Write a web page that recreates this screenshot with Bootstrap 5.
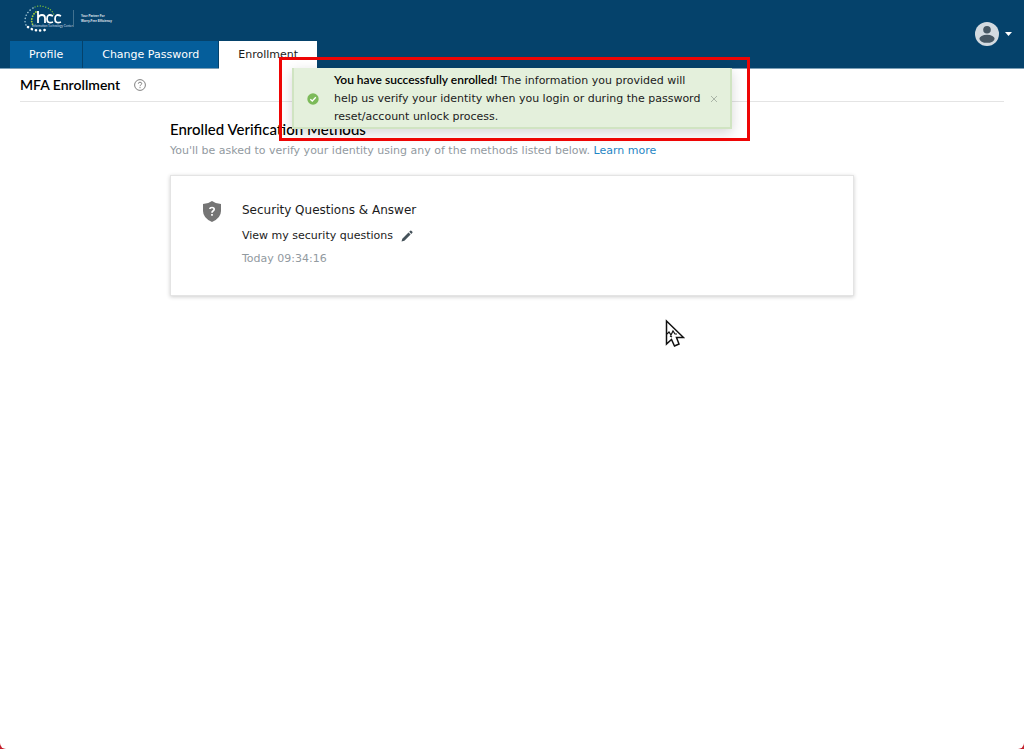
<!DOCTYPE html>
<html lang="en">
<head>
<meta charset="utf-8">
<meta name="viewport" content="width=device-width, initial-scale=1">
<title>MFA Enrollment</title>
<link href="https://cdn.jsdelivr.net/npm/bootstrap@5.3.0/dist/css/bootstrap.min.css" rel="stylesheet">
<style>
  html { background: #c4202c; }
  body { font-family: "DejaVu Sans", Verdana, sans-serif; font-size: 11px; line-height: 18px; color: #1b1b1b; background: #fff; border-radius: 0 0 6px 6px; }
  .lato { font-family: Lato, sans-serif; font-weight: 600; color: #000; }
  h1.lato { font-size: 14px; line-height: 18px; }
  h2.lato { font-size: 15px; line-height: 18px; font-weight: 500; }
  strong.lato { font-size: 12px; line-height: 12px; }
  .topbar { background: #05426b; border-bottom: 1px solid #7d9fb6; padding-left: 10px; }
  .brand-mark { height: 33px; margin: 4px 0 4px 13px; }
  .tabs { gap: 1px; }
  .tabs .nav-link { background: #055e9b; color: #fff; border-radius: 0; padding: 5px 19px 4px; }
  .tabs .nav-link.active { background: #fff; color: #1b1b1b; margin-bottom: -1px; }
  .account { margin-right: 12px; gap: 6px; }
  .page-head { margin: 0 20px; padding: 7px 0; gap: 14px; border-bottom: 1px solid #e4e4e4; }
  .methods { max-width: 684px; margin: 18px auto 0; }
  .muted { color: #929a9f; }
  .learn { color: #1f86c4; }
  .intro { margin-top: 4px; }
  .method-card { margin-top: 15px; padding: 25px 31px 27px; gap: 20px; border: 1px solid #e4e4e4; border-radius: 0; box-shadow: 0 1px 4px rgba(0,0,0,.2); }
  .method-title { font-size: 12px; }
  .stamp { margin-top: 5px; }
  .notice { position: absolute; z-index: 2; top: 68px; left: 50%; margin-left: -220px; width: 440px; background: #e4f0dc; border: 2px solid #d0e4c2; border-top: 0; border-radius: 0; padding: 4px 12px 1px 13px; box-shadow: 0 4px 12px rgba(0,0,0,.16); }
  .notice-text { padding: 0 8px 0 15px; }
  .outline-box { position: absolute; z-index: 3; top: 57px; left: 50%; margin-left: -233px; width: 471px; height: 84px; border: 3px solid #ee0505; pointer-events: none; }
  .pointer { position: absolute; top: 319px; left: 665px; }
</style>
</head>
<body class="min-vh-100 position-relative">
<header class="topbar d-flex justify-content-between">
  <div>
    <a href="#" class="d-block brand-mark" aria-label="hcc home">
      <svg class="d-block" width="100" height="33" viewBox="0 0 100 33" fill="none">
        <g stroke-linecap="round">
          <path d="M12 3Q17 1 22 3Q29 5 31 11" stroke="#79bd3a" stroke-width="1.3" stroke-dasharray=".1 2.6"/>
          <path d="M13 8Q10 10 9 14Q8 18 10 21" stroke="#a5cf3c" stroke-width="1.8" stroke-dasharray=".1 2.6"/>
          <path d="M10 4Q2 9 2 17Q2 22 7 25" stroke="#a9cbd9" stroke-width="1.5" stroke-dasharray=".1 3.2"/>
          <path d="M5 23Q12 28 22 26" stroke="#fff" stroke-width="2.6" stroke-dasharray=".1 4.2"/>
        </g>
        <path d="M15 7V19M15 14Q16 11 19 11Q22 11 22 14V19M30 12Q24 9 24 15Q24 20 30 18M38 12Q32 9 32 15Q32 20 38 18" stroke="#fff" stroke-width="1.8"/>
        <text x="9" y="23" fill="#cfdfe9" font-family="Lato, sans-serif" font-size="3">Information Technology Center</text>
        <path d="M50.500 6V23" stroke="#42718f"/>
        <g fill="#e2ebf1" font-family="Liberation Sans, sans-serif" font-size="3" font-weight="bold"><text x="58" y="13">Your Partner For</text><text x="58" y="18">Worry-Free Efficiency</text></g>
      </svg>
    </a>
    <nav class="nav tabs flex-nowrap">
      <a class="nav-link" href="#">Profile</a>
      <a class="nav-link" href="#">Change Password</a>
      <a class="nav-link active" aria-current="page" href="#">Enrollment</a>
    </nav>
  </div>
  <button class="btn border-0 p-0 d-flex align-items-center account" type="button" aria-label="Account menu">
    <svg width="24" height="24" viewBox="0 0 24 24"><circle cx="12" cy="12" r="12" fill="#d3dae0"/><circle cx="12" cy="7.700" r="3.800" fill="#475763"/><ellipse cx="12" cy="16.800" rx="7.600" ry="4" fill="#475763"/></svg>
    <svg width="7" height="4" viewBox="0 0 7 4"><path d="M0 0H7L3.500 4Z" fill="#fff"/></svg>
  </button>
</header>
<main>
  <div class="page-head d-flex align-items-center">
    <h1 class="lato m-0">MFA Enrollment</h1>
    <svg width="12" height="12" viewBox="0 0 12 12" fill="none" stroke="#808080"><circle cx="6" cy="6" r="5.400"/><path d="M4.300 4.700Q4.400 3.200 6 3.200Q7.700 3.200 7.700 4.600Q7.700 5.400 6.800 5.900Q6 6.400 6 7.200M6 8.100V9.200"/></svg>
  </div>
  <section class="methods">
    <h2 class="lato m-0">Enrolled Verification Methods</h2>
    <p class="muted intro mb-0">You'll be asked to verify your identity using any of the methods listed below. <a class="learn text-decoration-none" href="#">Learn more</a></p>
    <div class="card method-card flex-row align-items-start">
      <svg width="20" height="21" viewBox="0 0 20 21"><path d="M10 0Q14 3 19 3V10Q19 17 10 21Q1 17 1 10V3Q6 3 10 0Z" fill="#757575"/><path d="M7.800 8Q8 6.500 10 6.500Q12.200 6.500 12.200 8.300Q12.200 9.300 11 10Q10 10.600 10 11.800M10 13V14.800" fill="none" stroke="#fff" stroke-width="1.700"/></svg>
      <div>
        <div class="method-title">Security Questions &amp; Answer</div>
        <div class="d-flex align-items-center mt-2"><span>View my security questions</span>
          <button type="button" class="btn border-0 p-0 d-flex ms-2" aria-label="Edit security questions"><svg width="12" height="12" viewBox="0 0 12 12" fill="#45525a"><path d="M.5 11.500L1.300 8.700L7.500 2.500L9.600 4.600L3.400 10.800ZM8.200 1.800L9.300.7Q9.800.3 10.300.7L11.400 1.800Q11.800 2.300 11.400 2.800L10.300 3.900Z"/></svg></button>
        </div>
        <div class="muted stamp">Today 09:34:16</div>
      </div>
    </div>
  </section>
</main>
<div class="notice d-flex align-items-center" role="alert">
  <svg class="flex-shrink-0" width="12" height="12" viewBox="0 0 12 12"><circle cx="6" cy="6" r="5.700" fill="#7cba59"/><path d="M3.300 6.200L5.300 8L8.800 4.300" fill="none" stroke="#fff" stroke-width="1.300"/></svg>
  <p class="mb-0 flex-grow-1 notice-text"><strong class="lato">You have successfully enrolled!</strong> The information you provided will help us verify your identity when you login or during the password reset/account unlock process.</p>
  <button type="button" class="btn border-0 p-0 d-flex flex-shrink-0" aria-label="Close"><svg width="8" height="8" viewBox="0 0 8 8"><path d="M1 1L7 7M7 1L1 7" stroke="#aab5a7"/></svg></button>
</div>
<div class="outline-box"></div>
<svg class="pointer" width="20" height="29" viewBox="0 0 20 29" fill="#fff" stroke="#111" stroke-width="1.500"><path d="M1.500 2V25L6.500 20.500L9.500 27L14 25L11.500 18.500H18.500Z"/><path d="M2 15L4 13L6 16L8 12L10 15H12M5 17L7 18" fill="none" stroke-width="1.200"/></svg>
<script src="https://cdn.jsdelivr.net/npm/bootstrap@5.3.0/dist/js/bootstrap.bundle.min.js"></script>
</body>
</html>
